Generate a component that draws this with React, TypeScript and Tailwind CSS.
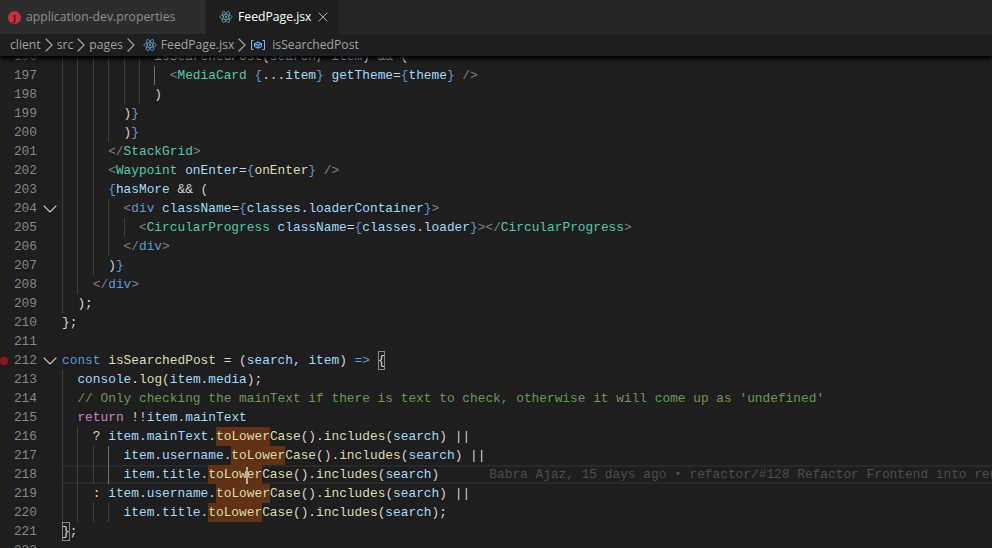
import type { ReactNode } from "react";
import { ChevronDown, ChevronRight, X } from "lucide-react";

const ReactIcon = ({ className }: { className: string }) => (
  <svg viewBox="0 0 16 16" className={className} fill="none" stroke="#519aba" strokeWidth="1">
    <circle cx="8" cy="8" r="1.3" fill="#519aba" stroke="none" />
    <ellipse cx="8" cy="8" rx="7" ry="2.8" />
    <ellipse cx="8" cy="8" rx="7" ry="2.8" transform="rotate(60 8 8)" />
    <ellipse cx="8" cy="8" rx="7" ry="2.8" transform="rotate(120 8 8)" />
  </svg>
);

const VariableIcon = () => (
  <svg viewBox="0 0 16 16" className="w-4 h-4 shrink-0" fill="none" stroke="#75beff" strokeWidth="1">
    <path d="M3.5 3.5H1.5V12.5H3.5M12.5 3.5H14.5V12.5H12.5" />
    <path d="M8 5L11.5 6.6V9.6L8 11.2L4.5 9.6V6.6Z" fill="#1c3a54" />
    <path d="M4.5 6.6L8 8.2L11.5 6.6M8 8.2V11.2" />
  </svg>
);

const Crumb = () => <ChevronRight className="w-6 h-6 -mx-1 shrink-0" strokeWidth={1.25} />;

const kw = (t: string) => <span className="text-[#569cd6]">{t}</span>;
const vr = (t: string) => <span className="text-[#9cdcfe]">{t}</span>;
const fn = (t: string) => <span className="text-[#dcdcaa]">{t}</span>;
const cm = (t: string) => <span className="text-[#4ec9b0]">{t}</span>;
const br = (t: string) => <span className="text-[#808080]">{t}</span>;

const Match = ({ children }: { children: ReactNode }) => (
  <span className="bg-[#613214] inline-block h-[19px]">{children}</span>
);

type Line = {
  n: number;
  indent: number;
  guides?: number;
  active?: number[];
  code?: ReactNode;
  fold?: boolean;
  dot?: boolean;
  current?: boolean;
};

const lines: Line[] = [
  { n: 196, indent: 12, guides: 6, code: <>{fn("isSearchedPost")}({vr("search")}, {vr("item")}) &amp;&amp; (</> },
  { n: 197, indent: 14, guides: 7, active: [6], code: <>{br("<")}{cm("MediaCard")} {kw("{")}...{vr("item")}{kw("}")} {vr("getTheme")}={kw("{")}{vr("theme")}{kw("}")} {br("/>")}</> },
  { n: 198, indent: 12, guides: 6, code: <>)</> },
  { n: 199, indent: 8, guides: 4, code: <>){kw("}")}</> },
  { n: 200, indent: 8, guides: 4, code: <>){kw("}")}</> },
  { n: 201, indent: 6, guides: 3, code: <>{br("</")}{cm("StackGrid")}{br(">")}</> },
  { n: 202, indent: 6, guides: 3, code: <>{br("<")}{cm("Waypoint")} {vr("onEnter")}={kw("{")}{fn("onEnter")}{kw("}")} {br("/>")}</> },
  { n: 203, indent: 6, guides: 3, code: <>{kw("{")}{vr("hasMore")} &amp;&amp; (</> },
  { n: 204, indent: 8, guides: 4, fold: true, code: <>{br("<")}{kw("div")} {vr("className")}={kw("{")}{vr("classes")}.{vr("loaderContainer")}{kw("}")}{br(">")}</> },
  { n: 205, indent: 10, guides: 5, code: <>{br("<")}{cm("CircularProgress")} {vr("className")}={kw("{")}{vr("classes")}.{vr("loader")}{kw("}")}{br("></")}{cm("CircularProgress")}{br(">")}</> },
  { n: 206, indent: 8, guides: 4, code: <>{br("</")}{kw("div")}{br(">")}</> },
  { n: 207, indent: 6, guides: 3, code: <>){kw("}")}</> },
  { n: 208, indent: 4, guides: 2, code: <>{br("</")}{kw("div")}{br(">")}</> },
  { n: 209, indent: 2, guides: 1, code: <>);</> },
  { n: 210, indent: 0, code: <>{"};"}</> },
  { n: 211, indent: 0 },
  {
    n: 212,
    indent: 0,
    fold: true,
    dot: true,
    code: (
      <>
        {kw("const")} {fn("isSearchedPost")} = ({vr("search")}, {vr("item")}) {kw("=>")}{" "}
        <span className="inline-block h-[19px] outline outline-1 -outline-offset-1 outline-[#888888]">{"{"}</span>
      </>
    ),
  },
  { n: 213, indent: 2, guides: 1, code: <>{vr("console")}.{fn("log")}({vr("item")}.{vr("media")});</> },
  { n: 214, indent: 2, guides: 1, code: <span className="text-[#6a9955]">// Only checking the mainText if there is text to check, otherwise it will come up as 'undefined'</span> },
  { n: 215, indent: 2, guides: 1, code: <><span className="text-[#c586c0]">return</span> !!{vr("item")}.{vr("mainText")}</> },
  { n: 216, indent: 4, guides: 2, code: <>? {vr("item")}.{vr("mainText")}.<Match>{fn("toLower")}</Match>{fn("Case")}().{fn("includes")}({vr("search")}) ||</> },
  { n: 217, indent: 8, guides: 4, active: [3], code: <>{vr("item")}.{vr("username")}.<Match>{fn("toLower")}</Match>{fn("Case")}().{fn("includes")}({vr("search")}) ||</> },
  {
    n: 218,
    indent: 8,
    guides: 4,
    active: [3],
    current: true,
    code: (
      <>
        {vr("item")}.{vr("title")}.
        <Match>
          <span className="relative">
            {fn("toLow")}
            <span className="absolute right-[-1px] top-0 w-[2px] h-[19px] bg-[#aeafad]" />
          </span>
          {fn("er")}
        </Match>
        {fn("Case")}().{fn("includes")}({vr("search")})
        <span className="ml-[50px] text-[#4d4d4d]">Babra Ajaz, 15 days ago • refactor/#128 Refactor Frontend into reusable components</span>
      </>
    ),
  },
  { n: 219, indent: 4, guides: 2, code: <>: {vr("item")}.{vr("username")}.<Match>{fn("toLower")}</Match>{fn("Case")}().{fn("includes")}({vr("search")}) ||</> },
  { n: 220, indent: 8, guides: 4, code: <>{vr("item")}.{vr("title")}.<Match>{fn("toLower")}</Match>{fn("Case")}().{fn("includes")}({vr("search")});</> },
  {
    n: 221,
    indent: 0,
    code: (
      <>
        <span className="inline-block h-[19px] outline outline-1 -outline-offset-1 outline-[#888888]">{"}"}</span>;
      </>
    ),
  },
  { n: 222, indent: 0 },
];

const CodeLine = ({ line }: { line: Line }) => {
  const guides = line.guides ?? 0;
  return (
    <div className="flex h-[19px] leading-[19px] whitespace-pre">
      <div className="w-[62px] shrink-0 flex items-center text-[#858585]">
        <div className="w-[9px] flex justify-start">
          {line.dot && <div className="w-2 h-2 rounded-full bg-[#8c1a1a]" />}
        </div>
        <div className="w-[28px] text-right">{line.n}</div>
        <div className="flex-1 flex justify-center">
          {line.fold && <ChevronDown className="w-[24px] h-[24px] shrink-0 text-[#c5c5c5]" strokeWidth={1.1} />}
        </div>
      </div>
      <div
        className={
          line.current
            ? "flex-1 flex min-w-0 overflow-hidden shadow-[inset_0_2px_0_#282828,inset_0_-2px_0_#282828]"
            : "flex-1 flex min-w-0 overflow-hidden"
        }
      >
        {Array.from({ length: guides }, (_, i) => (
          <span
            key={i}
            className={
              line.active?.includes(i)
                ? "shrink-0 w-[15.4px] border-l border-[#707070]"
                : "shrink-0 w-[15.4px] border-l border-[#404040]"
            }
          />
        ))}
        <span className="shrink-0" style={{ width: (line.indent - guides * 2) * 7.7 }} />
        <span className="text-[#d4d4d4]">{line.code}</span>
      </div>
    </div>
  );
};

const App = () => {
  return (
    <div className="w-[992px] h-[548px] overflow-hidden bg-[#1e1e1e] flex flex-col font-['Open_Sans',sans-serif]">
      <div className="h-[34px] bg-[#252526] flex shrink-0 text-[12.2px] relative z-20">
        <div className="w-[205px] bg-[#2d2d2d] flex items-center pl-2 gap-[5px] text-[#8f8f8f] mr-px">
          <div className="w-[13px] h-[13px] rounded-full bg-[#c8303a] flex items-center justify-center text-[9px] font-bold leading-none text-[#5a0a10]">J</div>
          <span>application-dev.properties</span>
        </div>
        <div className="w-[133px] bg-[#1e1e1e] flex items-center pl-[13px] text-white">
          <ReactIcon className="w-[14px] h-[14px] shrink-0 mr-[5px]" />
          <span>FeedPage.jsx</span>
          <X className="w-[16px] h-[16px] ml-[4px] text-[#c5c5c5]" strokeWidth={1.25} />
        </div>
      </div>
      <div className="h-[22px] bg-[#1e1e1e] flex items-center pl-[10px] shrink-0 text-[12.2px] text-[#a0a0a0] relative z-10 shadow-[0_3px_4px_#000000]">
        <span>client</span>
        <Crumb />
        <span>src</span>
        <Crumb />
        <span>pages</span>
        <Crumb />
        <ReactIcon className="w-[14px] h-[14px] shrink-0 ml-1 mr-1" />
        <span>FeedPage.jsx</span>
        <Crumb />
        <VariableIcon />
        <span className="ml-[6px]">isSearchedPost</span>
      </div>
      <div className="flex-1 min-h-0 overflow-hidden font-['Liberation_Mono',monospace] text-[12.83px]">
        <div className="-mt-[9px]">
          {lines.map((line) => (
            <CodeLine key={line.n} line={line} />
          ))}
        </div>
      </div>
    </div>
  );
};

export default App;
